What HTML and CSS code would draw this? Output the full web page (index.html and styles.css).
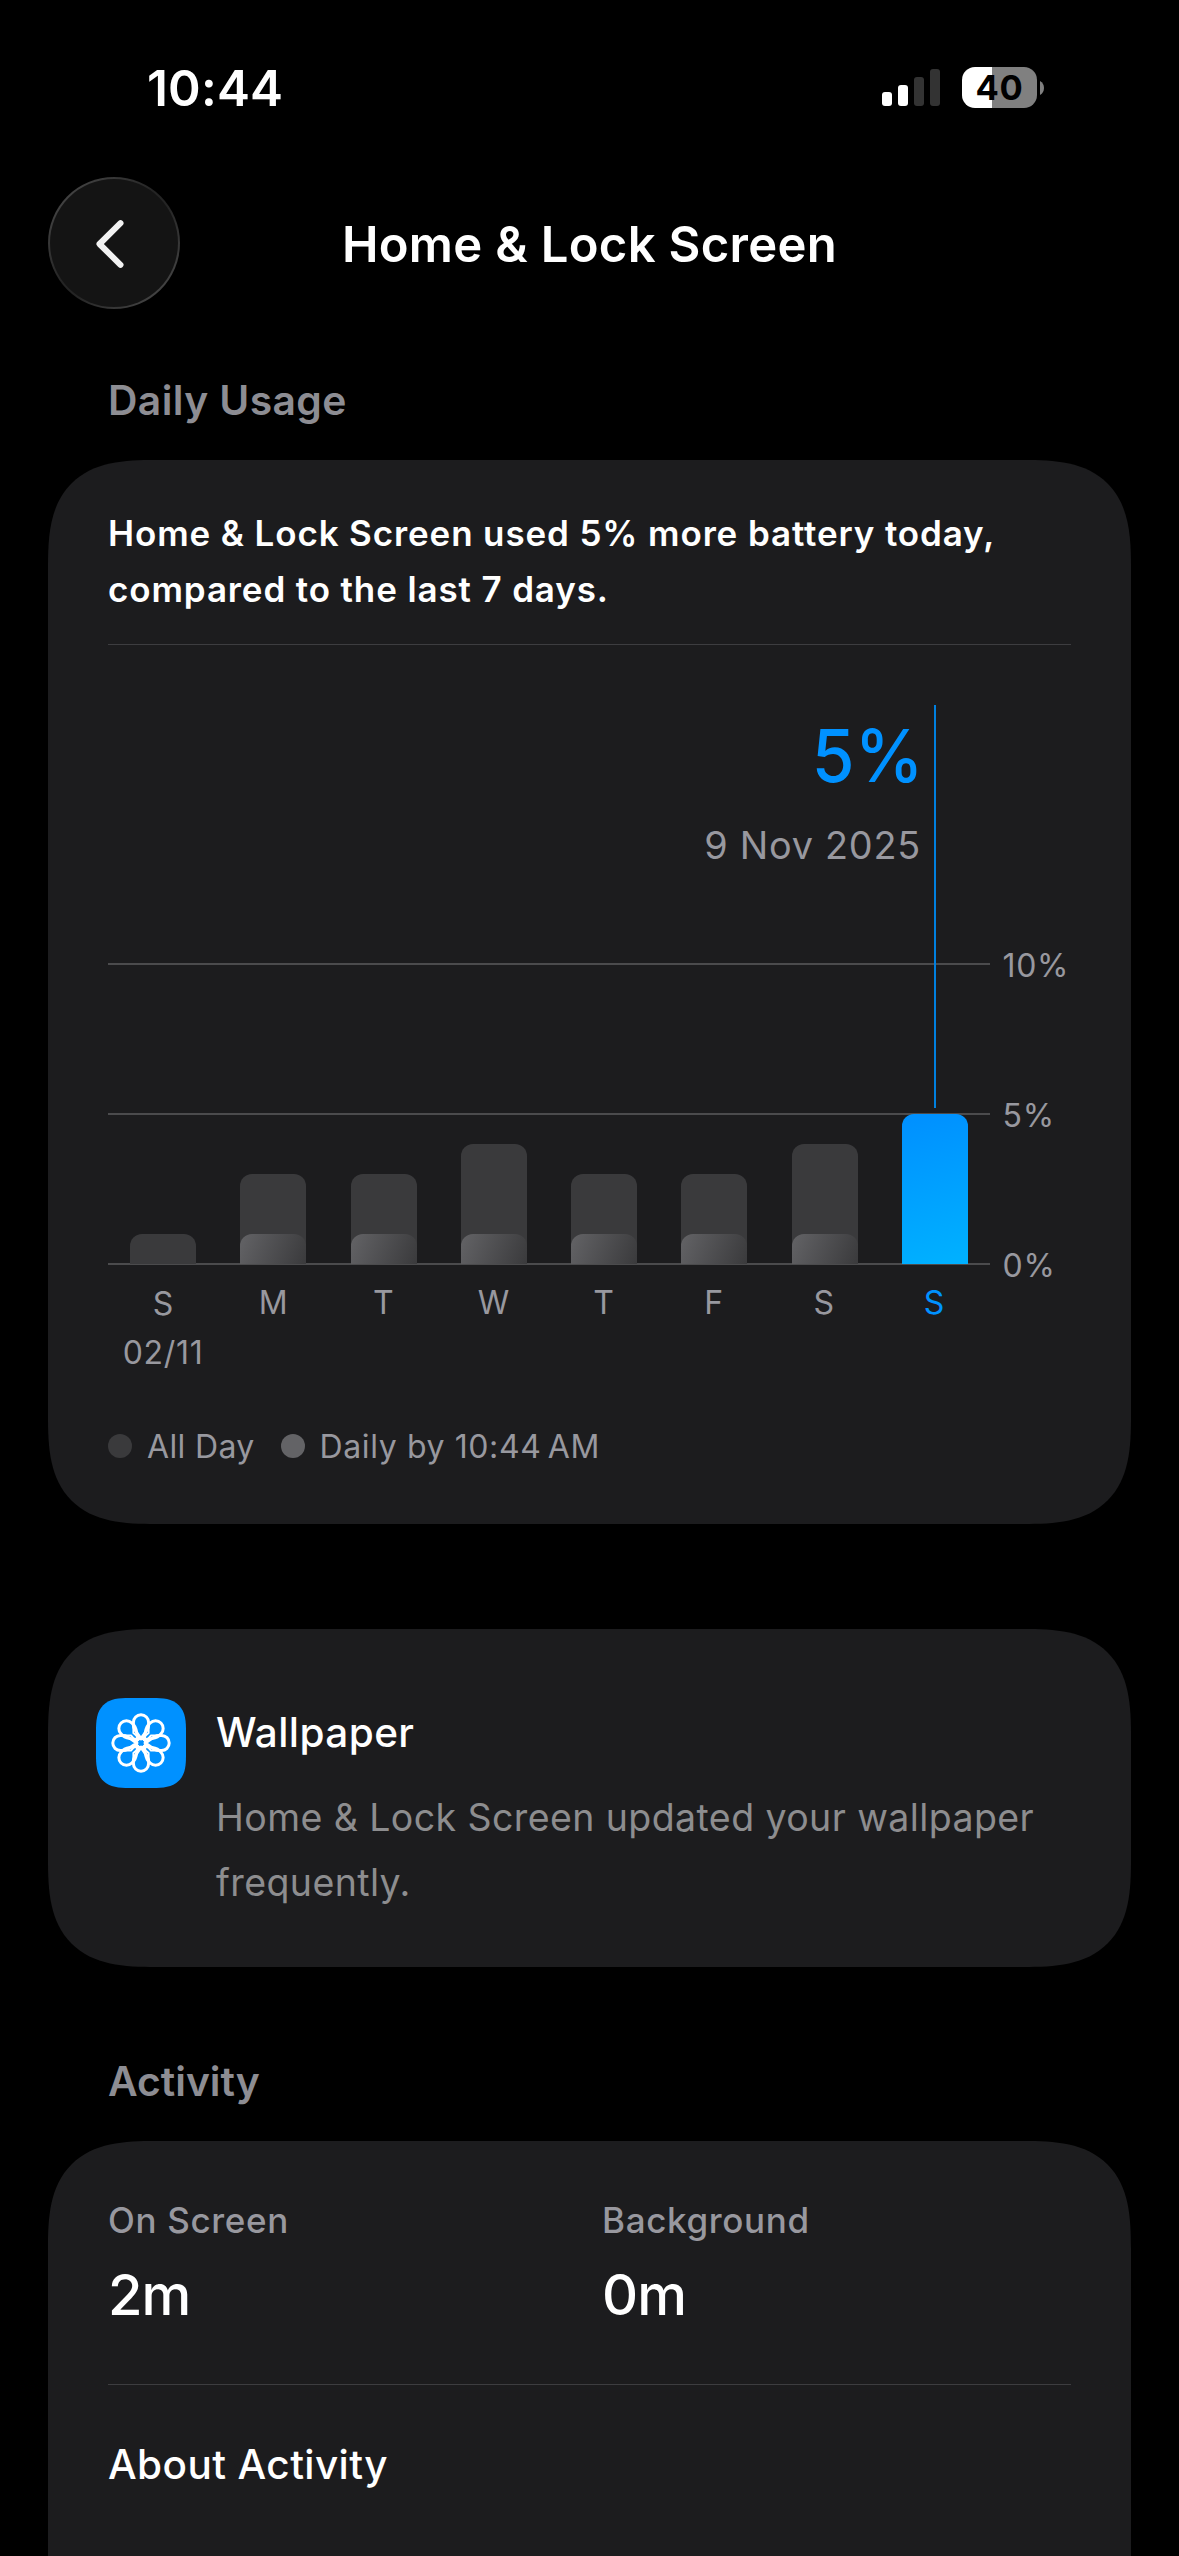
FILE: index.html
```
<!DOCTYPE html>
<html lang="en">
<head>
<meta charset="utf-8">
<title>Home &amp; Lock Screen</title>
<link rel="stylesheet" href="styles.css">
</head>
<body>
<header class="status-bar">
  <time class="clock">10:44</time>
  <div class="status-icons">
    <svg class="signal" width="58" height="37" viewBox="0 0 58 37" aria-hidden="true">
      <rect x="0" y="23" width="10" height="14" rx="3" fill="#fff"/>
      <rect x="16" y="16" width="10" height="21" rx="3" fill="#fff"/>
      <rect x="32" y="8" width="10" height="29" rx="3" fill="#333"/>
      <rect x="48" y="0" width="10" height="37" rx="3" fill="#333"/>
    </svg>
    <div class="battery"><span class="battery-level">40</span></div>
    <svg class="battery-cap" width="4" height="14" viewBox="0 0 4 14" aria-hidden="true"><path d="M0 0C2.700 1.400 4 4 4 7S2.700 12.600 0 14Z" fill="#808080"/></svg>
  </div>
</header>

<nav class="nav-bar">
  <button class="back" aria-label="Back">
    <svg width="28" height="48" viewBox="0 0 28 48" aria-hidden="true"><path d="M24.500 3.200L3.500 24L24.500 44.800" fill="none" stroke="#f2f2f2" stroke-width="6" stroke-linecap="round" stroke-linejoin="round"/></svg>
  </button>
  <h1 class="title">Home &amp; Lock Screen</h1>
</nav>

<main>
  <h2 class="section-title">Daily Usage</h2>
  <section class="card usage">
    <p class="summary">Home &amp; Lock Screen used 5% more battery today,<br>compared to the last 7 days.</p>
    <hr class="divider">
    <div class="chart">
      <div class="gridline line-10"></div>
      <div class="gridline line-5"></div>
      <div class="gridline line-0"></div>
      <div class="callout">
        <span class="callout-value">5%</span>
        <span class="callout-date">9 Nov 2025</span>
      </div>
      <div class="bars">
        <div class="slot"><div class="bar" style="height:30px"></div></div>
        <div class="slot"><div class="bar" style="height:90px"><div class="partial" style="height:30px"></div></div></div>
        <div class="slot"><div class="bar" style="height:90px"><div class="partial" style="height:30px"></div></div></div>
        <div class="slot"><div class="bar" style="height:120px"><div class="partial" style="height:30px"></div></div></div>
        <div class="slot"><div class="bar" style="height:90px"><div class="partial" style="height:30px"></div></div></div>
        <div class="slot"><div class="bar" style="height:90px"><div class="partial" style="height:30px"></div></div></div>
        <div class="slot"><div class="bar" style="height:120px"><div class="partial" style="height:30px"></div></div></div>
        <div class="slot"><div class="marker"></div><div class="bar selected" style="height:150px"></div></div>
      </div>
      <span class="tick tick-10">10%</span>
      <span class="tick tick-5">5%</span>
      <span class="tick tick-0">0%</span>
    </div>
    <div class="days">
      <div class="day first">S<span class="date">02/11</span></div>
      <div class="day">M</div>
      <div class="day">T</div>
      <div class="day">W</div>
      <div class="day">T</div>
      <div class="day">F</div>
      <div class="day">S</div>
      <div class="day today">S</div>
    </div>
    <div class="legend">
      <span class="dot dot-all"></span><span class="legend-label legend-all">All Day</span>
      <span class="dot dot-daily"></span><span class="legend-label legend-daily">Daily by 10:44&#8239;AM</span>
    </div>
  </section>

  <section class="card insight">
    <div class="app-icon">
      <svg width="60" height="60" viewBox="-30 -30 60 60" aria-hidden="true">
        <defs><path id="petal" d="M0 -4.500C-2 -7.500 -7.600 -13.500 -7.600 -17.500V-20.600A7.600 7.600 0 0 1 7.600 -20.600V-17.500C7.600 -13.500 2 -7.500 0 -4.500Z"/></defs>
        <g fill="none" stroke="#fff" stroke-width="3" stroke-linejoin="round">
          <use href="#petal"/>
          <use href="#petal" transform="rotate(45)"/>
          <use href="#petal" transform="rotate(90)"/>
          <use href="#petal" transform="rotate(135)"/>
          <use href="#petal" transform="rotate(180)"/>
          <use href="#petal" transform="rotate(225)"/>
          <use href="#petal" transform="rotate(270)"/>
          <use href="#petal" transform="rotate(315)"/>
          <path d="M-7.600 -18V-10L0 -3.500L7.600 -10V-18M-7.600 18V10L0 3.500L7.600 10V18M-18 -7.600H-10L-3.500 0L-10 7.600H-18M18 -7.600H10L3.500 0L10 7.600H18" stroke-width="2"/>
          <circle r="4.800"/>
        </g>
      </svg>
    </div>
    <div class="insight-body">
      <h3 class="insight-title">Wallpaper</h3>
      <p class="insight-text">Home &amp; Lock Screen updated your wallpaper<br>frequently.</p>
    </div>
  </section>

  <h2 class="section-title activity-title">Activity</h2>
  <section class="card activity">
    <div class="stats">
      <div class="stat"><span class="stat-label">On Screen</span><span class="stat-value">2m</span></div>
      <div class="stat"><span class="stat-label">Background</span><span class="stat-value">0m</span></div>
    </div>
    <hr class="divider">
    <div class="about">About Activity</div>
  </section>
</main>
</body>
</html>
```
FILE: styles.css
```
* { box-sizing: border-box; margin: 0; padding: 0; }

body {
  width: 1179px;
  height: 2556px;
  overflow: hidden;
  background: #000;
  color: #fff;
  font-family: Inter, "Liberation Sans", sans-serif;
}

.status-bar {
  display: flex;
  justify-content: space-between;
  align-items: center;
  height: 177px;
  padding: 0 135px 2px 147px;
}
.clock { font-size: 49.5px; font-weight: 600; letter-spacing: .17px; }
.status-icons { display: flex; align-items: center; }
.signal { margin-right: 22px; }
.battery {
  display: grid;
  place-items: center;
  width: 75px;
  height: 41px;
  border-radius: 13px;
  background: linear-gradient(90deg, #fff 30px, #808080 30px);
}
.battery-level { color: #000; font-size: 34.5px; font-weight: 700; line-height: 41px; letter-spacing: .6px; }
.battery-cap { margin-left: 3px; }

.nav-bar {
  display: grid;
  grid-template-columns: 132px 1fr 132px;
  align-items: center;
  height: 132px;
  padding: 0 48px;
}
.back {
  display: grid;
  place-items: center;
  width: 132px;
  height: 132px;
  padding: 1px 8px 0 0;
  border: 2px solid transparent;
  border-radius: 50%;
  background:
    linear-gradient(#141414, #141414) padding-box,
    linear-gradient(135deg, #414141 15%, #242424 45%, #242424 55%, #414141 85%) border-box;
}
.title { padding-top: 3px; text-align: center; font-size: 49px; font-weight: 600; line-height: 60px; letter-spacing: .31px; }

main { padding: 0 48px; }

.section-title {
  padding: 66px 60px 0;
  height: 151px;
  color: #8d8d93;
  font-size: 40.8px;
  font-weight: 600;
  line-height: 50px;
  letter-spacing: .4px;
}
.activity-title { padding-top: 89px; height: 174px; letter-spacing: 0; }

.card {
  background: #1c1c1e;
  border-radius: 78px;
}
@supports (corner-shape: superellipse(1.5)) {
  .card { border-radius: 108px; corner-shape: superellipse(1.5); }
}

.divider { height: 1px; border: 0; background: #3d3d40; }

.usage { height: 1064px; padding: 45px 60px 0; }
.summary { height: 112px; font-size: 35px; font-weight: 600; line-height: 56px; letter-spacing: .87px; white-space: nowrap; }
.usage .divider { margin-top: 27px; }

.chart {
  display: grid;
  grid-template-columns: 882px 81px;
  grid-template-rows: 259px 150px 150px;
  margin-top: 60px;
}
.gridline { grid-column: 1; height: 2px; margin-top: -1px; background: #4b4b4d; }
.line-10 { grid-row: 2; }
.line-5 { grid-row: 3; }
.line-0 { grid-row: 3; align-self: end; margin-bottom: -1px; }

.callout {
  grid-area: 1 / 1;
  display: flex;
  flex-direction: column;
  align-items: flex-end;
  gap: 26px;
  padding: 11px 69px 0 0;
}
.callout-value {
  margin-right: -2px;
  color: #0091ff;
  font-size: 73.5px;
  font-weight: 500;
  line-height: 80px;
  transform: scaleX(.942);
  transform-origin: right;
}
.callout-date { color: #98989f; font-size: 37.8px; line-height: 46px; letter-spacing: .75px; }

.bars { grid-area: 1 / 1 / 4 / 2; display: grid; grid-template-columns: repeat(8, 1fr); }
.slot { display: flex; flex-direction: column; justify-content: flex-end; align-items: center; }
.bar {
  display: flex;
  align-items: flex-end;
  width: 66px;
  border-radius: 12px 12px 0 0;
  background: #3a3a3c;
}
.partial {
  width: 100%;
  border-radius: 12px 12px 0 0;
  background: linear-gradient(112deg, #636366, #3a3a3c);
}
.selected { background: linear-gradient(165deg, #0091ff 5%, #00b0ff 95%); }
.marker { flex: 1; width: 2px; margin-bottom: 6px; background: #0080df; }

.tick { grid-column: 2; padding-left: 12.5px; color: #98989f; font-size: 32px; line-height: 39px; letter-spacing: .7px; }
.tick-10 { grid-row: 2; margin-top: -18px; }
.tick-5 { grid-row: 3; margin-top: -18px; }
.tick-0 { grid-row: 3; align-self: end; margin-bottom: -21px; }

.days {
  display: grid;
  grid-template-columns: repeat(8, 1fr);
  width: 881px;
  height: 90px;
  margin-top: 19px;
  text-align: center;
  color: #98989f;
  font-size: 32px;
  line-height: 40px;
}
.first { padding-top: 1px; }
.date { display: block; margin-top: 9px; letter-spacing: .7px; }
.today { color: #0091ff; }

.legend {
  display: flex;
  align-items: center;
  margin-top: 52px;
  color: #98989f;
  font-size: 32px;
  line-height: 40px;
}
.legend-label { padding-top: 2px; }
.dot { width: 24px; height: 24px; border-radius: 50%; }
.dot-all { margin-right: 15px; background: #3a3a3c; }
.dot-daily { margin: 0 15px 0 26px; background: #636366; }
.legend-all { letter-spacing: .35px; }
.legend-daily { letter-spacing: .6px; }

.insight { display: flex; gap: 30px; height: 338px; margin-top: 105px; padding: 69px 48px 0; }
.app-icon {
  display: grid;
  place-items: center;
  width: 90px;
  height: 90px;
  border-radius: 24px;
  background: #0091ff;
}
@supports (corner-shape: superellipse(1.5)) {
  .app-icon { border-radius: 33px; corner-shape: superellipse(1.5); }
}
.insight-body { padding-top: 5px; white-space: nowrap; }
.insight-title { font-size: 40.5px; font-weight: 500; line-height: 60px; letter-spacing: .4px; }
.insight-text { margin-top: 22px; color: #8d8d8f; font-size: 37.5px; line-height: 65px; letter-spacing: .41px; }

.activity { height: 415px; padding: 54px 60px 0; border-bottom-left-radius: 0; border-bottom-right-radius: 0; }
.stats { display: grid; grid-template-columns: 494px 1fr; }
.stat { display: flex; flex-direction: column; gap: 15px; }
.stat-label { color: #98989f; font-size: 35px; font-weight: 500; line-height: 50px; letter-spacing: .65px; }
.stat-value { font-size: 56px; font-weight: 500; line-height: 71px; letter-spacing: -1px; }
.activity .divider { margin-top: 53px; }
.about { margin-top: 55px; font-size: 40.5px; font-weight: 500; line-height: 50px; letter-spacing: .4px; }
```
